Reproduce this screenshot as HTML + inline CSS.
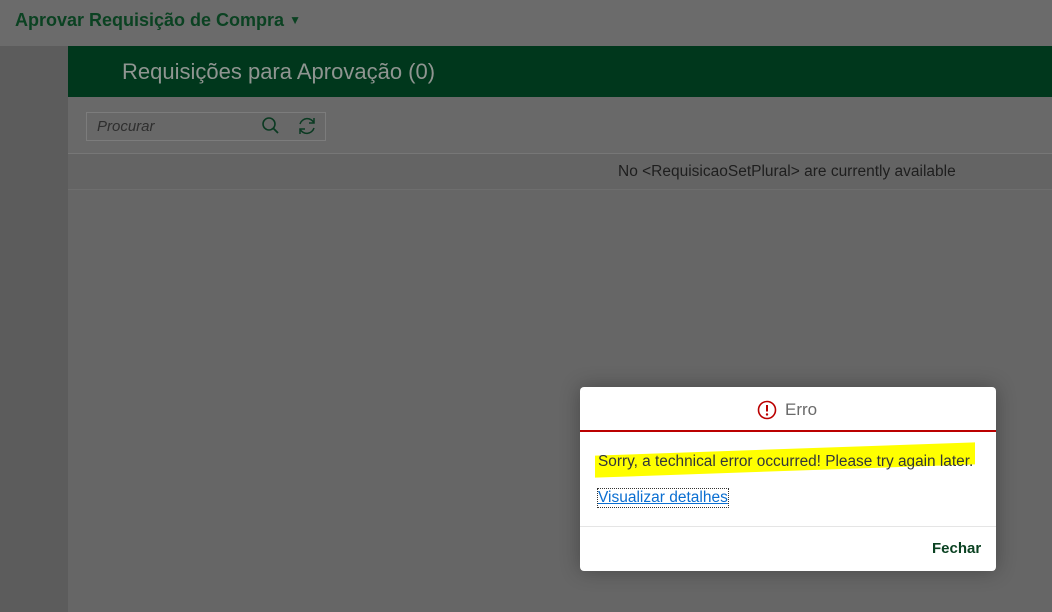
<!DOCTYPE html>
<html><head><meta charset="utf-8"><style>
body{margin:0;width:1052px;height:612px;overflow:hidden;background:#5c5c5c;font-family:"Liberation Sans",sans-serif;position:relative}
.a{position:absolute}
</style></head><body>
<div class="a" style="left:0;top:0;width:1052px;height:46px;background:#6b6b6b"></div>
<div class="a" style="left:15px;top:10px;font-size:18px;font-weight:bold;color:#0b4222">Aprovar Requisição de Compra <span style="font-size:12px;position:relative;top:-2px">▼</span></div>
<div class="a" style="left:68px;top:46px;width:984px;height:566px;background:#666"></div>
<div class="a" style="left:68px;top:46px;width:984px;height:51px;background:#00371c"></div>
<div class="a" style="left:122px;top:59px;font-size:22px;color:#8f9591">Requisições para Aprovação (0)</div>
<div class="a" style="left:68px;top:97px;width:984px;height:56px;background:#696969;border-bottom:1px solid #777"></div>
<div class="a" style="left:86px;top:112px;width:238px;height:27px;border:1px solid #7c7c7c;background:#686868"></div>
<div class="a" style="left:97px;top:118px;font-size:15px;font-style:italic;color:#2e2e2e">Procurar</div>
<svg class="a" style="left:261px;top:116px" width="20" height="20" viewBox="0 0 20 20"><circle cx="8" cy="8" r="6" fill="none" stroke="#0b3a22" stroke-width="1.6"/><path d="M12.5 12.5 L17 17" stroke="#0b3a22" stroke-width="1.8"/></svg>
<svg class="a" style="left:296px;top:115px" width="22" height="22" viewBox="0 0 22 22"><path d="M4 9 A7.5 7.5 0 0 1 18 8 M18 13 A7.5 7.5 0 0 1 4 14" fill="none" stroke="#0b3a22" stroke-width="1.5"/><path d="M18 3 V8 H13 M4 19 V14 H9" fill="none" stroke="#0b3a22" stroke-width="1.5"/></svg>
<div class="a" style="left:68px;top:154px;width:984px;height:35px;background:#646464;border-bottom:1px solid #6e6e6e"></div>
<div class="a" style="left:618px;top:163px;font-size:15.5px;color:#1e1e1e">No &lt;RequisicaoSetPlural&gt; are currently available</div>
<div class="a" style="left:580px;top:387px;width:416px;height:184px;background:#fff;border-radius:4px;box-shadow:0 0 20px rgba(0,0,0,.3)">
 <div class="a" style="left:0;top:0;width:416px;height:43px;border-bottom:2px solid #bb0000"></div>
 <svg class="a" style="left:177px;top:13px" width="20" height="20" viewBox="0 0 20 20"><circle cx="10" cy="10" r="8.5" fill="none" stroke="#bb0000" stroke-width="1.6"/><path d="M10 5 V11.5" stroke="#bb0000" stroke-width="2"/><circle cx="10" cy="14.5" r="1.2" fill="#bb0000"/></svg>
 <div class="a" style="left:205px;top:13px;font-size:17px;color:#6a6a6a">Erro</div>
 <div class="a" style="left:15px;top:62px;width:380px;height:22px;background:#ffff00;transform:skewY(-2deg)"></div>
 <div class="a" style="left:18px;top:66px;font-size:15.4px;color:#32363a">Sorry, a technical error occurred! Please try again later.</div>
 <div class="a" style="left:18px;top:102px;font-size:15.5px;color:#0a6ed1;text-decoration:underline;outline:1px dotted #333">Visualizar detalhes</div>
 <div class="a" style="left:0;top:139px;width:416px;border-top:1px solid #e5e5e5"></div>
 <div class="a" style="left:352px;top:153px;font-size:15px;font-weight:bold;color:#0b4222">Fechar</div>
</div>
</body></html>
